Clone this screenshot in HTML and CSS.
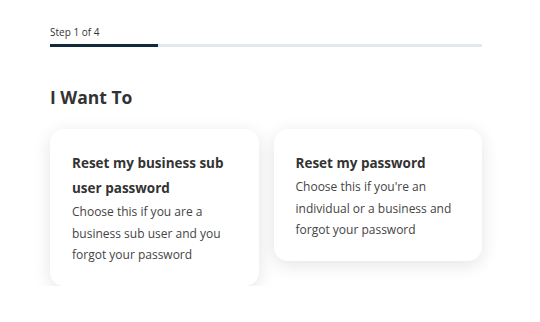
FILE: index.html
```html
<!DOCTYPE html>
<html lang="en">
<head>
<meta charset="utf-8">
<link rel="stylesheet" href="styles.css">
</head>
<body>
<main class="page">
  <div class="stepper">
    <div class="step-label">Step 1 of 4</div>
    <div class="track"><div class="fill" style="width:25%"></div></div>
  </div>
  <h1 class="heading">I Want To</h1>
  <div class="options">
    <div class="card">
      <div class="card-title">Reset my business sub user password</div>
      <div class="card-desc">Choose this if you are a business sub user and you forgot your password</div>
    </div>
    <div class="card">
      <div class="card-title">Reset my password</div>
      <div class="card-desc">Choose this if you're an individual or a business and forgot your password</div>
    </div>
  </div>
</main>
</body>
</html>
```
FILE: styles.css
```css
* { box-sizing: border-box; }
html, body { margin: 0; padding: 0; background: #fff; }
body { font-family: "Open Sans", "Noto Sans", sans-serif; color: #333; }
.page { width: 432px; margin-left: 50px; padding-top: 25px; }
.step-label { font-size: 10px; line-height: 14px; color: #333; }
.track { margin-top: 5px; height: 3px; background: #e3e8ed; }
.fill { height: 100%; background: #0f2a3d; }
.heading { margin: 38px 0 0; font-size: 17.5px; line-height: 24px; font-weight: 700; color: #333; }
.options { display: flex; gap: 15px; align-items: flex-start; margin-top: 20px; }
.card { flex: 1; background: #fff; border-radius: 14px; padding: 22px 20px 20px 22px; box-shadow: 0 4px 18px rgba(0,0,0,0.11); }
.card-title { font-size: 13.5px; font-weight: 700; line-height: 25px; color: #333; }
.card-desc { font-size: 12px; line-height: 21.5px; color: #444; }
```
